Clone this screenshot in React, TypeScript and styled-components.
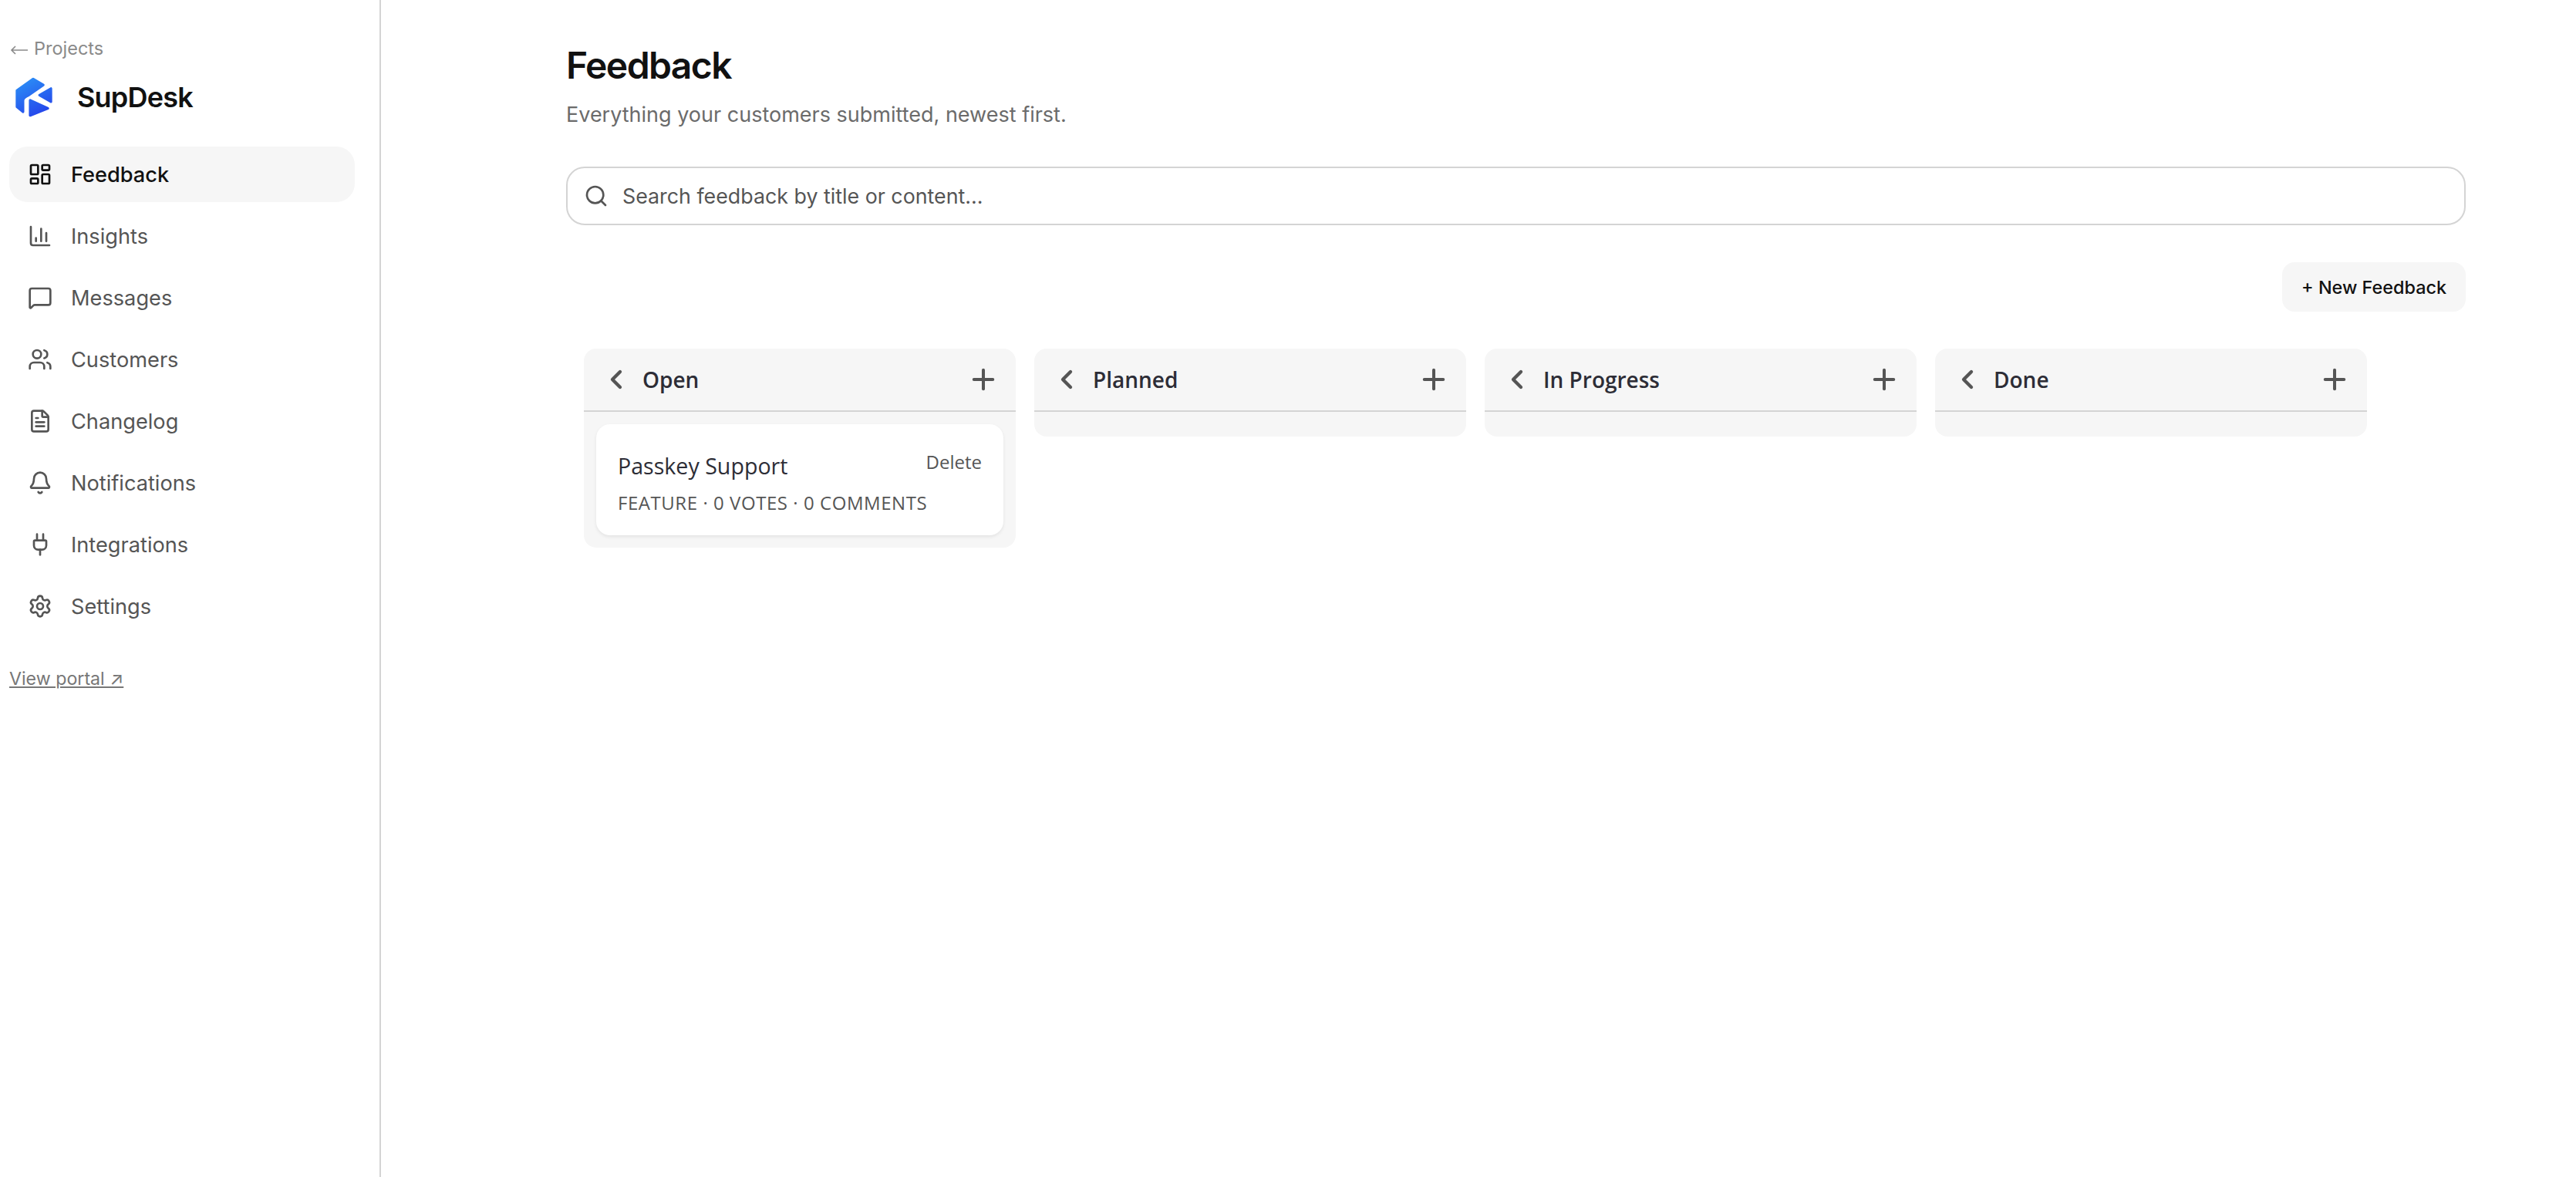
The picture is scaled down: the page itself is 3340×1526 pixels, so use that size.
import {
  Bell,
  ChartColumn,
  ChevronLeft,
  FileText,
  LayoutDashboard,
  MessageSquare,
  Plug,
  Plus,
  Search,
  Settings,
  Users,
} from 'lucide-react';
import styled, { createGlobalStyle } from 'styled-components';

const GlobalStyle = createGlobalStyle`
  html, body {
    margin: 0;
    padding: 0;
    background: #fff;
  }
  * {
    box-sizing: border-box;
  }
`;

const Page = styled.div`
  display: flex;
  min-height: 1526px;
  font-family: Inter, 'Liberation Sans', sans-serif;
  color: #111;
`;

const Sidebar = styled.aside`
  width: 494px;
  flex-shrink: 0;
  padding: 46px 32px 0 12px;
  border-right: 2px solid #d4d4d4;
`;

const BackLink = styled.a`
  display: flex;
  align-items: center;
  gap: 7px;
  font-size: 23.5px;
  line-height: 34px;
  color: #8a8a8a;
`;

const BackArrow = styled.svg`
  width: 24px;
  height: 14px;
  margin: 4px 0 0 1px;
`;

const Brand = styled.div`
  display: flex;
  align-items: center;
  gap: 32px;
  height: 52px;
  margin: 20px 0 0 8px;
`;

const BrandName = styled.span`
  font-size: 36px;
  font-weight: 600;
  letter-spacing: -0.8px;
  color: #111;
`;

const Nav = styled.nav`
  display: flex;
  flex-direction: column;
  gap: 8px;
  margin-top: 38px;
`;

const NavItem = styled.a<{ active?: boolean }>`
  display: flex;
  align-items: center;
  gap: 24px;
  height: 72px;
  padding-left: 24px;
  border-radius: 24px;
  font-size: 27.2px;
  font-weight: ${(props) => (props.active ? 500 : 400)};
  color: ${(props) => (props.active ? '#111' : '#555')};
  background: ${(props) => (props.active ? '#f6f6f6' : 'transparent')};
`;

const PortalLink = styled.a`
  display: inline-block;
  margin-top: 41px;
  font-size: 23.2px;
  line-height: 34px;
  color: #777;
  text-decoration: underline;
`;

const Main = styled.main`
  flex: 1;
  padding: 55px 143px 0 240px;
`;

const Title = styled.h1`
  margin: 0;
  font-size: 48px;
  line-height: 60px;
  font-weight: 600;
  letter-spacing: -1.6px;
  color: #111;
`;

const Subtitle = styled.p`
  margin: 13px 0 0;
  font-size: 27px;
  line-height: 42px;
  color: #6b6b6b;
`;

const SearchBox = styled.label`
  display: flex;
  align-items: center;
  gap: 16px;
  height: 76px;
  margin-top: 46px;
  padding-left: 21px;
  border: 2px solid #d4d4d4;
  border-radius: 24px;
  color: #555;
`;

const SearchInput = styled.input`
  flex: 1;
  border: none;
  outline: none;
  background: transparent;
  font-family: inherit;
  font-size: 26.8px;
  color: #555;
  &::placeholder {
    color: #555;
    opacity: 1;
  }
`;

const Actions = styled.div`
  display: flex;
  justify-content: flex-end;
  margin-top: 48px;
`;

const NewButton = styled.button`
  height: 64px;
  padding: 0 25px;
  border: none;
  border-radius: 16px;
  background: #f6f6f6;
  font-family: inherit;
  font-size: 23.4px;
  font-weight: 500;
  color: #111;
`;

const Board = styled.div`
  display: flex;
  align-items: flex-start;
  gap: 24px;
  margin-top: 48px;
  padding-left: 23px;
  font-family: 'Open Sans', sans-serif;
`;

const Column = styled.section`
  width: 560px;
  padding-bottom: 32px;
  border-radius: 16px;
  background: #f6f6f6;
`;

const ColumnHeader = styled.header`
  display: flex;
  align-items: center;
  height: 82px;
  padding: 0 21px 0 22px;
  border-bottom: 2px solid #d4d4d4;
  color: #555;
`;

const ColumnName = styled.h2`
  flex: 1;
  margin: 0 0 0 14px;
  font-size: 28px;
  font-weight: 600;
  color: #2d2d36;
`;

const CardList = styled.div`
  margin: 16px 16px -16px;
`;

const Card = styled.article`
  height: 144px;
  padding: 30px 28px 0;
  border-radius: 18px;
  background: #fff;
  box-shadow: 0 2px 4px rgba(0, 0, 0, 0.08);
`;

const CardTop = styled.div`
  display: flex;
  justify-content: space-between;
  align-items: flex-start;
`;

const CardTitle = styled.div`
  font-size: 28.6px;
  line-height: 48px;
  color: #2d2d36;
`;

const DeleteLink = styled.span`
  font-size: 24px;
  line-height: 38px;
  color: #555;
`;

const CardMeta = styled.div`
  margin-top: 7px;
  font-size: 24px;
  letter-spacing: 0.55px;
  line-height: 34px;
  color: #555;
`;

const LogoMark = () => (
  <svg width="48" height="52" viewBox="60 180 146 156" aria-hidden="true">
    <defs>
      <linearGradient id="logoFill" gradientUnits="userSpaceOnUse" x1="90" y1="185" x2="165" y2="335">
        <stop offset="0" stopColor="#2b8ff6" />
        <stop offset="1" stopColor="#2541ea" />
      </linearGradient>
    </defs>
    <g fill="url(#logoFill)" stroke="url(#logoFill)" strokeWidth="10" strokeLinejoin="round">
      <path d="M66 232 L130 186 L170 210 L112 250 Q92 258 90 270 L90 316 L66 296 Z" />
      <path d="M155 250 L200 224 L200 276 Z" />
      <path d="M118 270 L188 302 L118 330 Z" />
    </g>
  </svg>
);

const navItems = [
  { label: 'Feedback', Icon: LayoutDashboard, active: true },
  { label: 'Insights', Icon: ChartColumn },
  { label: 'Messages', Icon: MessageSquare },
  { label: 'Customers', Icon: Users },
  { label: 'Changelog', Icon: FileText },
  { label: 'Notifications', Icon: Bell },
  { label: 'Integrations', Icon: Plug },
  { label: 'Settings', Icon: Settings },
];

const columns = ['Open', 'Planned', 'In Progress', 'Done'];

const App = () => (
  <Page>
    <GlobalStyle />
    <Sidebar>
      <BackLink>
        <BackArrow viewBox="0 0 24 14" fill="none" stroke="currentColor" strokeWidth="1.6">
          <path d="M23 7H2M7 2 2 7l5 5" />
        </BackArrow>
        Projects
      </BackLink>
      <Brand>
        <LogoMark />
        <BrandName>SupDesk</BrandName>
      </Brand>
      <Nav>
        {navItems.map(({ label, Icon, active }) => (
          <NavItem key={label} active={active}>
            <Icon size={32} />
            {label}
          </NavItem>
        ))}
      </Nav>
      <PortalLink>View portal ↗</PortalLink>
    </Sidebar>
    <Main>
      <Title>Feedback</Title>
      <Subtitle>Everything your customers submitted, newest first.</Subtitle>
      <SearchBox>
        <Search size={32} />
        <SearchInput placeholder="Search feedback by title or content..." />
      </SearchBox>
      <Actions>
        <NewButton>+ New Feedback</NewButton>
      </Actions>
      <Board>
        {columns.map((name) => (
          <Column key={name}>
            <ColumnHeader>
              <ChevronLeft size={40} strokeWidth={2.6} />
              <ColumnName>{name}</ColumnName>
              <Plus size={42} strokeWidth={2.3} />
            </ColumnHeader>
            {name === 'Open' && (
              <CardList>
                <Card>
                  <CardTop>
                    <CardTitle>Passkey Support</CardTitle>
                    <DeleteLink>Delete</DeleteLink>
                  </CardTop>
                  <CardMeta>FEATURE · 0 VOTES · 0 COMMENTS</CardMeta>
                </Card>
              </CardList>
            )}
          </Column>
        ))}
      </Board>
    </Main>
  </Page>
);

export default App;
